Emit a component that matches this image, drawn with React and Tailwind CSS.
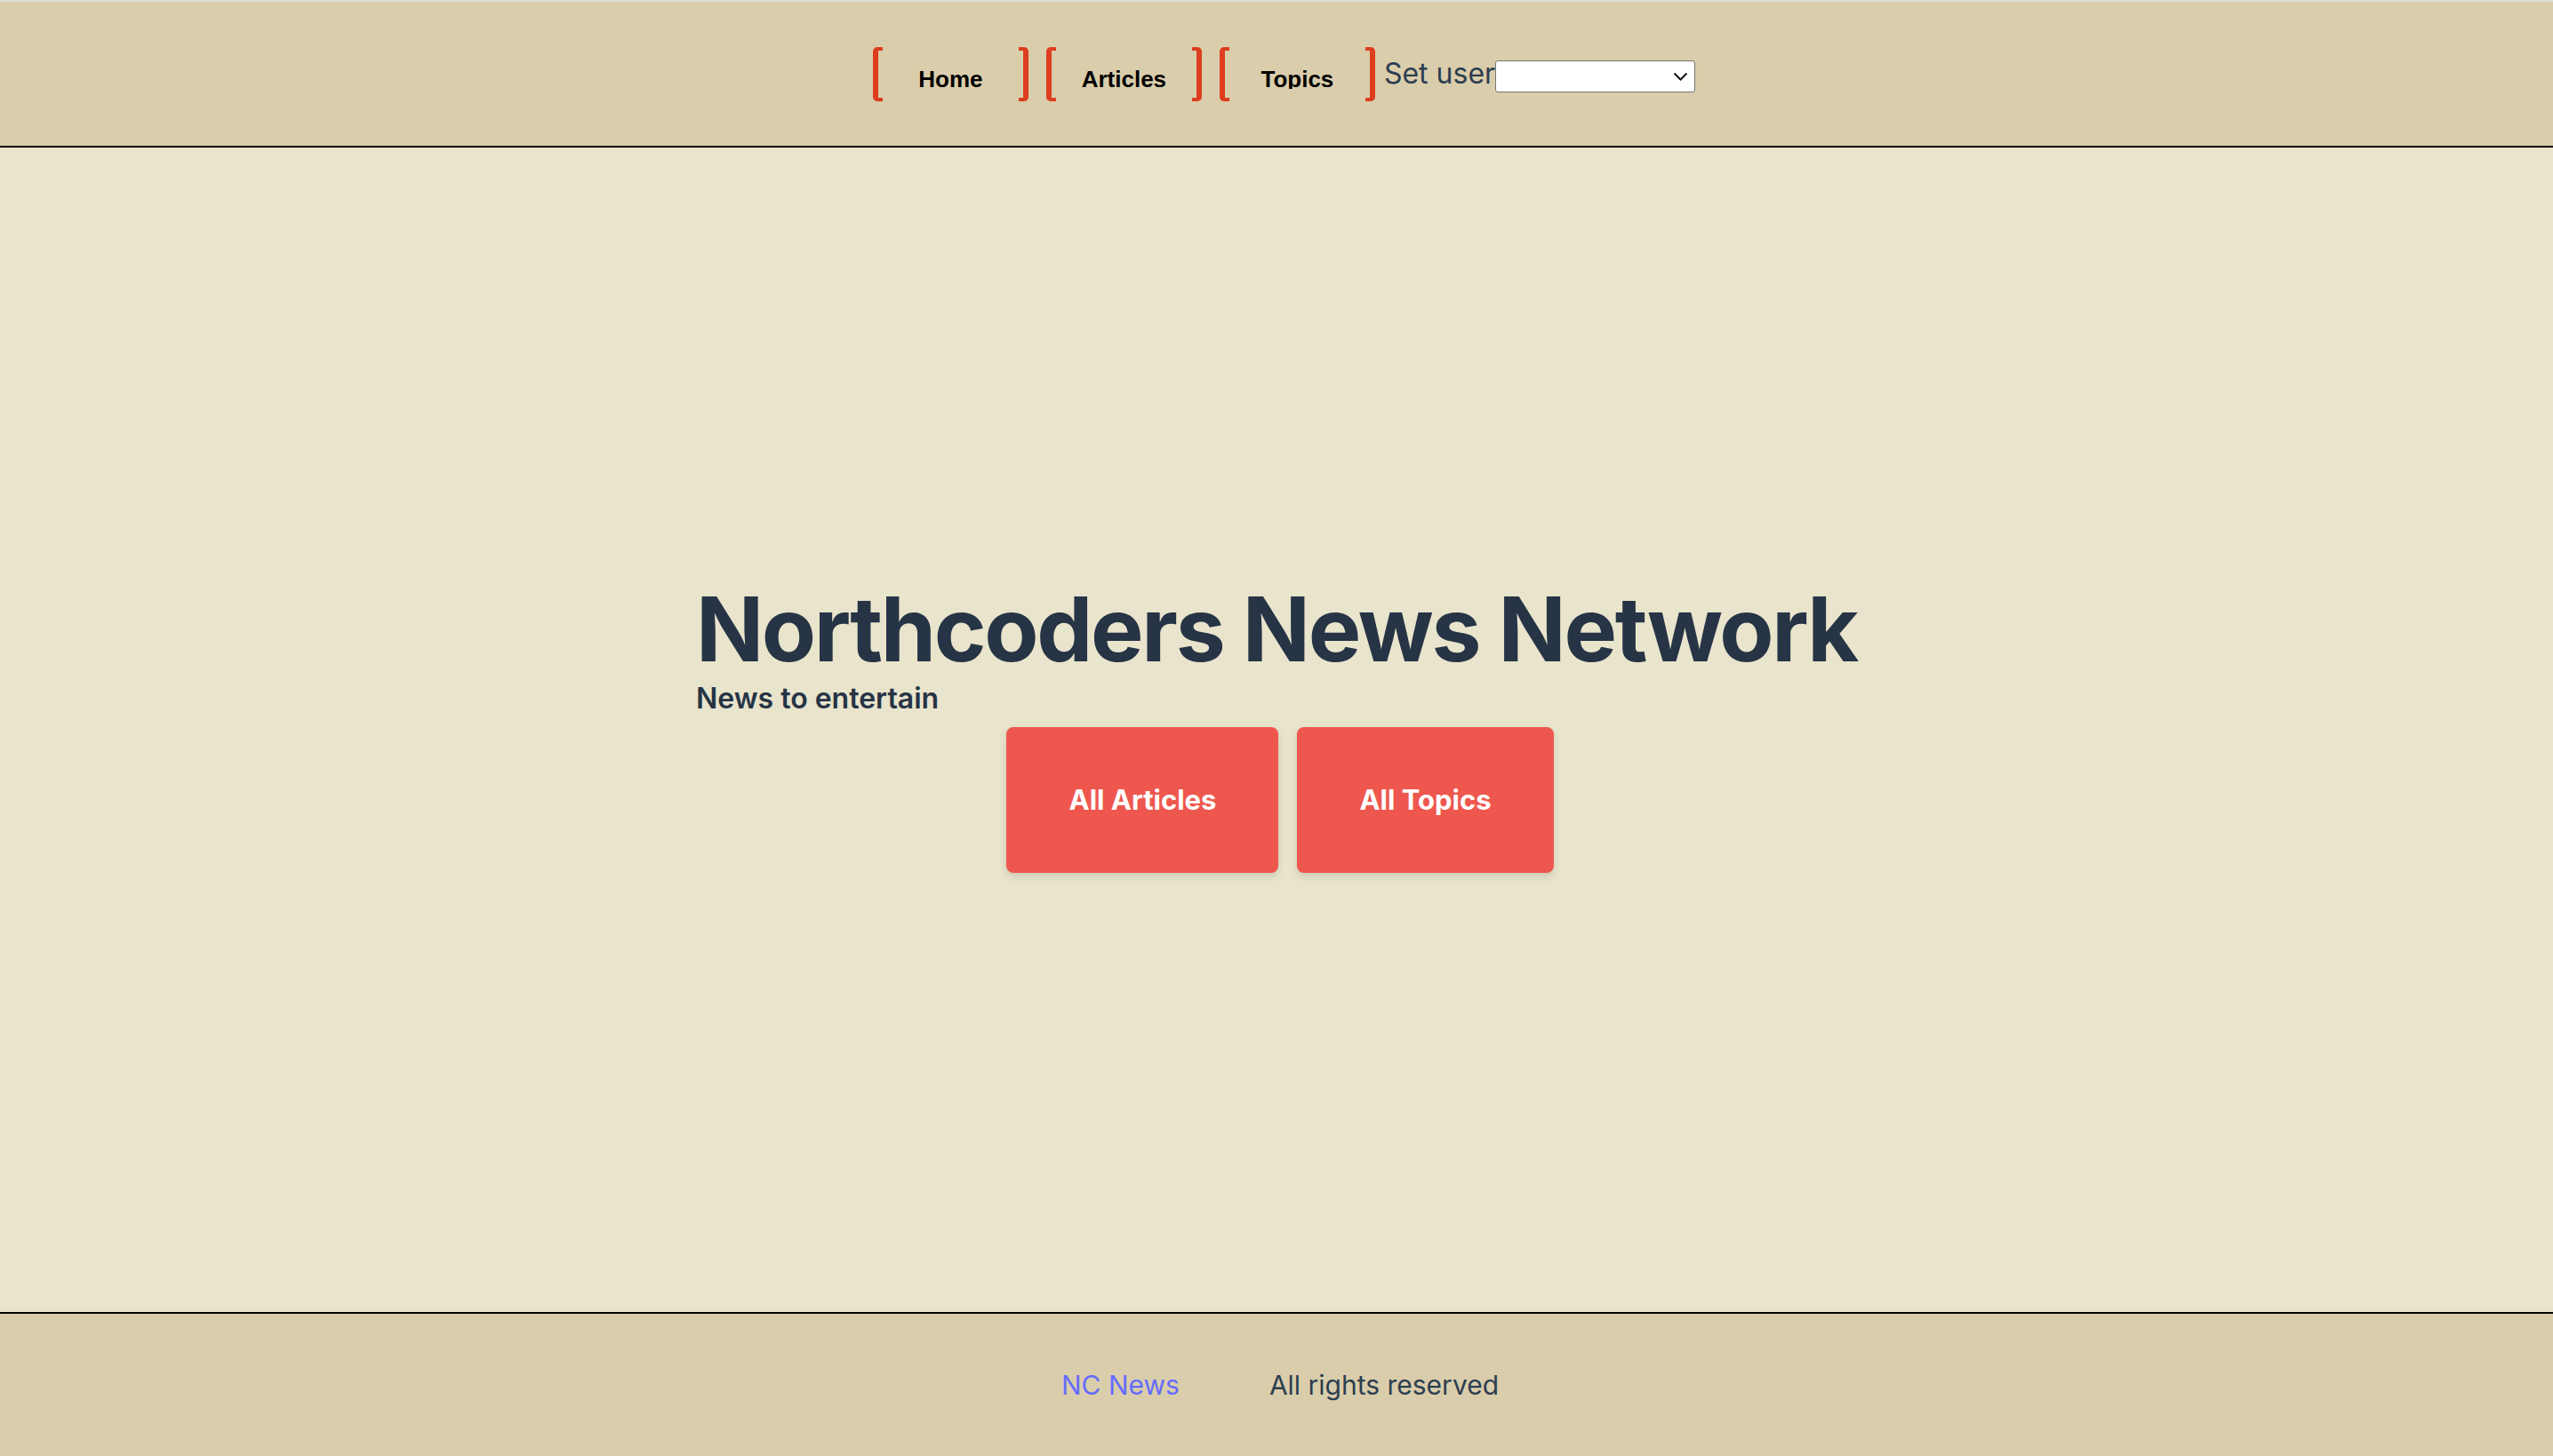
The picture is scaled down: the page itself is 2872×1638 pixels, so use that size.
import { useState } from "react";

const navItems = ["Home", "Articles", "Topics"];

function NavItem({ label }) {
  // the reference clips the text box just under the baseline (Topics loses its descender)
  const clip = label === "Topics" ? "h-[23px] overflow-hidden" : "";
  return (
    <a href="#" className="flex h-[61px] w-[175px] items-stretch no-underline">
      <span className="w-[11px] rounded-l-[5px] border-y-[4px] border-l-[6px] border-[#dc3e1e]" />
      <span className="flex flex-1 justify-center">
        <span
          className={`mt-[24px] text-[26px] font-bold leading-[25px] text-black [font-family:'Liberation_Sans',Arial,sans-serif] ${clip}`}
        >
          {label}
        </span>
      </span>
      <span className="w-[11px] rounded-r-[5px] border-y-[4px] border-r-[6px] border-[#dc3e1e]" />
    </a>
  );
}

export default function App() {
  const [user, setUser] = useState("");

  return (
    <div className="flex min-h-screen flex-col bg-[#e9e4cc] text-[#263445] [font-family:Inter,'Noto_Sans',sans-serif]">
      <header className="flex h-[166px] items-center justify-center border-t-2 border-b-2 border-t-[#dedcdc] border-b-black bg-[#dacdab] pl-[17px]">
        <nav className="flex items-center gap-[20px]">
          {navItems.map((item) => (
            <NavItem key={item} label={item} />
          ))}
        </nav>

        <label className="ml-[10px] text-[32px] leading-[38px] text-[#2c3e50]">
          Set user
        </label>

        <div className="relative mt-[6px] h-[36px] w-[225px]">
          <select
            value={user}
            onChange={(e) => setUser(e.target.value)}
            className="h-full w-full appearance-none rounded-[3px] border border-[#767676] bg-white"
          >
            <option value=""></option>
          </select>
          <svg
            className="pointer-events-none absolute right-[8px] top-[13px]"
            width="17"
            height="10"
            viewBox="0 0 17 10"
            fill="none"
          >
            <path d="M1.5 1.5 L8.5 8.5 L15.5 1.5" stroke="#111" strokeWidth="2" />
          </svg>
        </div>
      </header>

      <main className="flex flex-1 flex-col items-center justify-center pb-[12px]">
        <div className="flex flex-col items-start">
          <h1 className="text-[100px] font-bold leading-[120px] tracking-[-2.3px]">
            Northcoders News Network
          </h1>
          <p className="-mt-[1px] text-[32px] font-semibold leading-[38px]">
            News to entertain
          </p>
        </div>

        <div className="mt-[13px] ml-[8px] flex gap-[21px]">
          <button className="h-[164px] rounded-[8px] bg-[#ee574e] px-[70px] text-[31px] font-bold text-white shadow-[0_4px_8px_rgba(0,0,0,0.12)]">
            All Articles
          </button>
          <button className="h-[164px] rounded-[8px] bg-[#ee574e] px-[70px] text-[31px] font-bold text-white shadow-[0_4px_8px_rgba(0,0,0,0.12)]">
            All Topics
          </button>
        </div>
      </main>

      <footer className="flex h-[162px] items-center justify-center gap-[101px] border-t-2 border-black bg-[#dacdab] pl-[8px] text-[30px] leading-[36px]">
        <a href="#" className="text-[#646cff]">
          NC News
        </a>
        <p className="text-[#2c3e50]">All rights reserved</p>
      </footer>
    </div>
  );
}
